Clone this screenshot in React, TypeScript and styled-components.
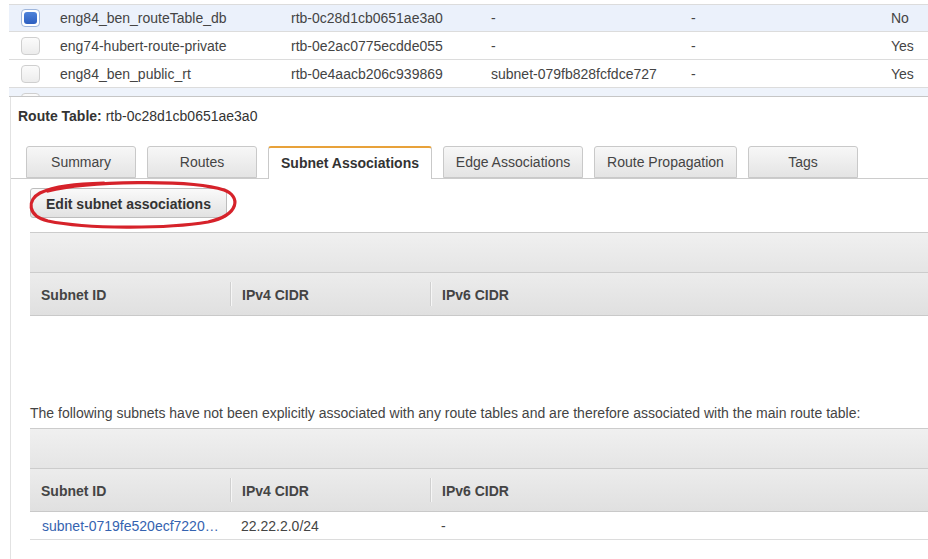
import React from "react";
import styled, { createGlobalStyle } from "styled-components";

const Global = createGlobalStyle`
  html, body { margin: 0; padding: 0; background: #fff; }
  body { font-family: "Liberation Sans", Arial, sans-serif; color: #444; font-size: 14px; overflow: hidden; }
  * { box-sizing: border-box; }
`;

const Page = styled.div`
  width: 928px;
  height: 559px;
  overflow: hidden;
  display: flex;
  flex-direction: column;
`;

const TopTable = styled.div`
  margin-left: 9px;
  padding-top: 4px;
  height: 97px;
  overflow: hidden;
  border-bottom: 1px solid #c6c6c6;
  flex-shrink: 0;
`;

const Row = styled.div<{ $bg?: string; $first?: boolean }>`
  display: grid;
  grid-template-columns: 41px 231px 200px 200px 200px 1fr;
  height: 28px;
  align-items: center;
  background: ${(p) => p.$bg || "#fff"};
  border-top: ${(p) => (p.$first ? "1px solid #dcdcdc" : "none")};
  border-bottom: 1px solid #dcdcdc;
`;

const Cell = styled.div<{ $center?: boolean }>`
  padding-left: ${(p) => (p.$center ? "0" : "10px")};
  display: flex;
  justify-content: ${(p) => (p.$center ? "center" : "flex-start")};
  white-space: nowrap;
  overflow: hidden;
  color: #444;
`;

const Check = styled.span<{ $on?: boolean }>`
  display: inline-block;
  width: 19px;
  height: 18px;
  margin-left: 2px;
  border-radius: 4px;
  border: 1px solid ${(p) => (p.$on ? "#9fb6dc" : "#cfcfcf")};
  background: ${(p) => (p.$on ? "#fff" : "linear-gradient(#fbfbfb, #ececec)")};
  position: relative;
  &::after {
    content: "";
    display: ${(p) => (p.$on ? "block" : "none")};
    position: absolute;
    inset: 2px;
    border-radius: 3px;
    background: linear-gradient(#4f83d9, #2d5fc0);
  }
`;

const Panel = styled.div`
  flex: 1;
  margin-left: 10px;
  border-left: 1px solid #e2e2e2;
  display: flex;
  flex-direction: column;
`;

const Title = styled.div`
  padding: 9px 0 0 7px;
  line-height: 20px;
  font-size: 14px;
  color: #333;
  b { font-weight: bold; }
`;

const TabBar = styled.div`
  margin-top: 20px;
  display: flex;
  gap: 11px;
  padding-left: 15px;
  border-bottom: 1px solid #cccccc;
  height: 33px;
  align-items: flex-end;
`;

const Tab = styled.div<{ $active?: boolean; $w: number }>`
  width: ${(p) => p.$w}px;
  height: ${(p) => (p.$active ? "33px" : "32px")};
  margin-bottom: ${(p) => (p.$active ? "-1px" : "0")};
  border: 1px solid #c9c9c9;
  border-top: ${(p) => (p.$active ? "2px solid #e8a23a" : "1px solid #c9c9c9")};
  border-bottom: ${(p) => (p.$active ? "none" : "1px solid #c9c9c9")};
  border-radius: 3px 3px 0 0;
  background: ${(p) => (p.$active ? "#fff" : "linear-gradient(#f7f7f7, #e4e4e4)")};
  display: flex;
  align-items: center;
  justify-content: center;
  font-size: 14px;
  font-weight: ${(p) => (p.$active ? "bold" : "normal")};
  color: ${(p) => (p.$active ? "#333" : "#444")};
  padding-bottom: ${(p) => (p.$active ? "2px" : "1px")};
  white-space: nowrap;
`;

const ButtonWrap = styled.div`
  position: relative;
  margin: 9px 0 0 19px;
  align-self: flex-start;
`;

const Button = styled.button`
  height: 30px;
  width: 197px;
  padding: 1px 0 0;
  font-family: inherit;
  font-size: 14px;
  font-weight: bold;
  color: #333;
  border: 1px solid #bdbdbd;
  border-radius: 3px;
  background: linear-gradient(#fafafa, #e2e2e2);
`;

const Circle = styled.svg`
  position: absolute;
  left: -4px;
  top: -10px;
  width: 215px;
  height: 52px;
  overflow: visible;
  pointer-events: none;
`;

const Table = styled.div<{ $mt: number }>`
  margin: ${(p) => p.$mt}px 0 0 19px;
  border-top: 1px solid #cccccc;
`;

const FilterBar = styled.div`
  height: 40px;
  background: linear-gradient(#f0f0f0, #e5e5e5);
  border-bottom: 1px solid #cccccc;
`;

const HeadRow = styled.div`
  height: 43px;
  display: grid;
  grid-template-columns: 200px 200px 1fr;
  align-items: center;
  background: linear-gradient(#ececec, #e0e0e0);
  border-bottom: 1px solid #c9c9c9;
`;

const HeadCell = styled.div<{ $sep?: boolean }>`
  height: 24px;
  display: flex;
  align-items: center;
  padding: 2px 0 0 11px;
  font-weight: bold;
  font-size: 14px;
  color: #444;
  border-left: ${(p) => (p.$sep ? "1px solid #d0d0d0" : "none")};
  box-shadow: ${(p) => (p.$sep ? "inset 1px 0 0 #f6f6f6" : "none")};
`;

const DataRow = styled.div`
  height: 28px;
  display: grid;
  grid-template-columns: 200px 200px 1fr;
  align-items: center;
  border-bottom: 1px solid #dcdcdc;
`;

const DataCell = styled.div`
  padding: 0 8px 0 11px;
  white-space: nowrap;
  overflow: hidden;
  text-overflow: ellipsis;
  color: #444;
`;

const LinkCell = styled(DataCell)`
  padding: 0 8px 0 12px;
  color: #3563b0;
`;

const Note = styled.div`
  margin: 88px 0 0 19px;
  line-height: 18px;
  font-size: 14px;
  color: #444;
  white-space: nowrap;
`;

const rows = [
  { name: "eng84_ben_routeTable_db", id: "rtb-0c28d1cb0651ae3a0", sub: "-", main: "No", on: true, bg: "#ebf1fb" },
  { name: "eng74-hubert-route-private", id: "rtb-0e2ac0775ecdde055", sub: "-", main: "Yes", on: false, bg: "#fff" },
  { name: "eng84_ben_public_rt", id: "rtb-0e4aacb206c939869", sub: "subnet-079fb828fcfdce727", main: "Yes", on: false, bg: "#fff" },
  { name: "", id: "", sub: "", main: "", on: false, bg: "#eef3fb" },
];

const tabs = [
  { label: "Summary", w: 110 },
  { label: "Routes", w: 110 },
  { label: "Subnet Associations", w: 164, active: true },
  { label: "Edge Associations", w: 140 },
  { label: "Route Propagation", w: 143 },
  { label: "Tags", w: 110 },
];

function Header() {
  return (
    <HeadRow>
      <HeadCell>Subnet ID</HeadCell>
      <HeadCell $sep>IPv4 CIDR</HeadCell>
      <HeadCell $sep>IPv6 CIDR</HeadCell>
    </HeadRow>
  );
}

export default function App() {
  return (
    <>
      <Global />
      <Page>
        <TopTable>
          {rows.map((r, i) => (
            <Row key={i} $bg={r.bg} $first={i === 0}>
              <Cell $center>
                <Check $on={r.on} />
              </Cell>
              <Cell>{r.name}</Cell>
              <Cell>{r.id}</Cell>
              <Cell>{r.sub}</Cell>
              <Cell>{r.name ? "-" : ""}</Cell>
              <Cell>{r.main}</Cell>
            </Row>
          ))}
        </TopTable>
        <Panel>
          <Title>
            <b>Route Table:</b> rtb-0c28d1cb0651ae3a0
          </Title>
          <TabBar>
            {tabs.map((t) => (
              <Tab key={t.label} $w={t.w} $active={t.active}>
                {t.label}
              </Tab>
            ))}
          </TabBar>
          <ButtonWrap>
            <Button>Edit subnet associations</Button>
            <Circle viewBox="0 0 215 52">
              <path
                d="M 22 13 C 60 3, 165 1, 198 12 C 215 18, 214 37, 182 44 C 140 51, 60 51, 22 43 C 1 38, 1 22, 14 15 C 28 8, 50 6, 78 5"
                fill="none"
                stroke="#d6222a"
                strokeWidth="3.2"
                strokeLinecap="round"
              />
            </Circle>
          </ButtonWrap>
          <Table $mt={14}>
            <FilterBar />
            <Header />
          </Table>
          <Note>
            The following subnets have not been explicitly associated with any route tables and are therefore associated with the main route table:
          </Note>
          <Table $mt={6}>
            <FilterBar />
            <Header />
            <DataRow>
              <LinkCell>subnet-0719fe520ecf7220…</LinkCell>
              <DataCell>22.22.2.0/24</DataCell>
              <DataCell>-</DataCell>
            </DataRow>
          </Table>
        </Panel>
      </Page>
    </>
  );
}
